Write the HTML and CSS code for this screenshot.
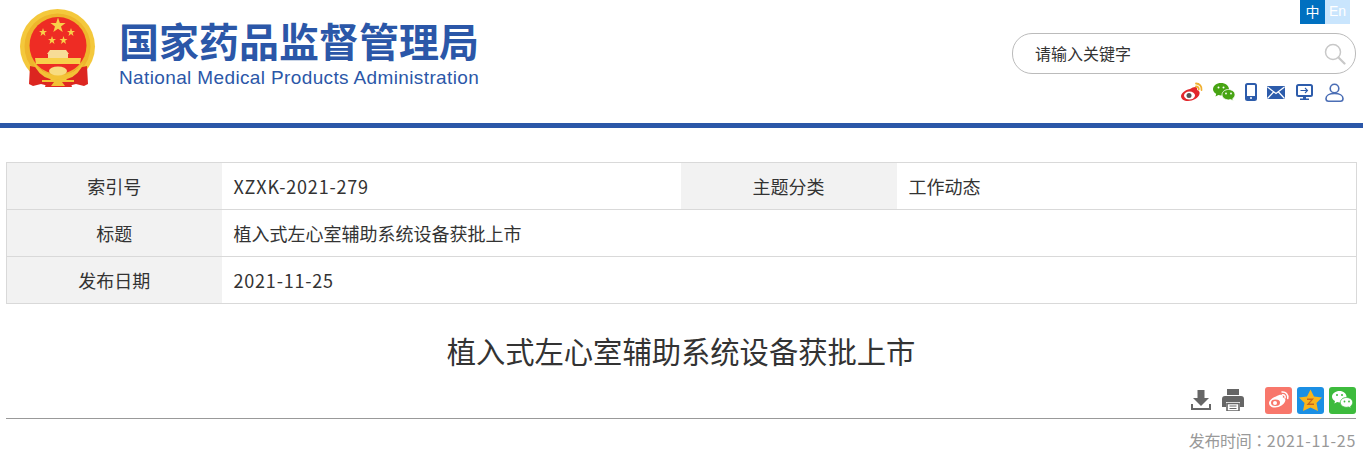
FILE: index.html
```html
<!DOCTYPE html>
<html lang="zh-CN">
<head>
<meta charset="utf-8">
<title>植入式左心室辅助系统设备获批上市</title>
<link rel="stylesheet" href="styles.css">
</head>
<body>
<header class="site-header">
  <a class="brand">
    <svg class="emblem" viewBox="20 8 76 81" width="76" height="81">
      <circle cx="57.500" cy="46.500" r="37.500" fill="#f4c83c"/>
      <circle cx="57.500" cy="46.500" r="33" fill="#eeb52c"/>
      <circle cx="58" cy="45.500" r="28.500" fill="#ee2c24"/>
      <polygon fill="#f8d04a" points="58,17.500 59.900,23 65.600,23 61,26.400 62.700,32 58,28.700 53.300,32 55,26.400 50.400,23 56.100,23"/>
      <polygon fill="#f8d04a" points="43,28 44,31 47,31 44.600,32.800 45.500,36 43,34.100 40.500,36 41.400,32.800 39,31 42,31"/>
      <polygon fill="#f8d04a" points="71,28 72,31 75,31 72.600,32.800 73.500,36 71,34.100 68.500,36 69.400,32.800 67,31 70,31"/>
      <polygon fill="#f8d04a" points="52,36 53,39 56,39 53.600,40.800 54.500,44 52,42.100 49.500,44 50.400,40.800 48,39 51,39"/>
      <polygon fill="#f8d04a" points="63.500,36 64.500,39 67.500,39 65.100,40.800 66,44 63.500,42.100 61,44 61.900,40.800 59.500,39 62.500,39"/>
      <path d="M47 54l3-4h16l3 4h-1v4H48v-4z" fill="#f7dc96"/>
      <path d="M35 58h46l-1 6H36z" fill="#f8d04a"/>
      <path d="M30 66l9 2 12 9-2 9-8-2-8 2-4-2z" fill="#dc2620"/>
      <path d="M87 66l-9 2-12 9 2 9 8-2 8 2 4-2z" fill="#dc2620"/>
      <path d="M47 80h23l2 7H45z" fill="#e02a22"/>
      <path d="M33 62q10 11 19 13h13q9-2 19-13-5 14-17 17H50Q38 76 33 62z" fill="#f3c236"/>
      <ellipse cx="58" cy="71" rx="9" ry="4.500" fill="#f8dc80"/>
      <path d="M42 80h32v2H62l3 4H51l3-4H42z" fill="#f3c236"/>
    </svg>
    <span class="brand-text">
      <strong class="brand-cn">国家药品监督管理局</strong>
      <span class="brand-en">National Medical Products Administration</span>
    </span>
  </a>
  <div class="tools">
    <div class="lang"><span class="lang-cn">中</span><span class="lang-en">En</span></div>
    <div class="search">
      <span class="search-text">请输入关键字</span>
      <svg class="search-icon" viewBox="0 0 22 22" width="22" height="22"><circle cx="9" cy="9" r="7.500" fill="none" stroke="#c8c8c8" stroke-width="1.500"/><path d="M14.500 14.500l6 6" stroke="#c8c8c8" stroke-width="2.200" stroke-linecap="round"/></svg>
    </div>
    <div class="links">
      <svg class="l-weibo" viewBox="0 0 24 20" width="24" height="20"><path d="M10 7c3-2 6-3 7-1 .5 1 0 2 0 2 2 .5 3 2 2.500 4C18.500 16 13 19 8 19c-4 0-7-2-7-5 0-2 3-6 9-7z" fill="#e2272c"/><ellipse cx="9.500" cy="13.500" rx="5.500" ry="4" fill="#fff"/><circle cx="9" cy="13.500" r="2.500" fill="#555"/><path d="M16 1.500c3.500 0 6 3 5.500 6.500M16 4.500c2 0 3 1.300 2.800 3" fill="none" stroke="#f0b030" stroke-width="1.800" stroke-linecap="round"/></svg>
      <svg class="l-wechat" viewBox="0 0 22 18" width="22" height="18"><path d="M8 0c4.400 0 8 2.700 8 6.200 0 3.400-3.600 6.200-8 6.200-1 0-1.800-.1-2.600-.4L2.500 13.500l.7-2.700C1.200 9.600 0 8 0 6.200 0 2.700 3.600 0 8 0z" fill="#47a413"/><path d="M15.500 6.500c3.600 0 6.500 2.300 6.500 5.200 0 1.600-.9 3-2.300 4l.5 2.200-2.500-1.300c-.7.200-1.400.3-2.200.3-3.600 0-6.500-2.300-6.500-5.200s2.900-5.200 6.500-5.200z" fill="#47a413" stroke="#fff" stroke-width=".8"/><circle cx="5.500" cy="4.500" r="1" fill="#fff"/><circle cx="10.500" cy="4.500" r="1" fill="#fff"/><circle cx="13" cy="10.500" r=".9" fill="#fff"/><circle cx="18" cy="10.500" r=".9" fill="#fff"/></svg>
      <svg class="l-phone" viewBox="0 0 12 18" width="12" height="18"><rect x="1" y="1" width="10" height="16" rx="1.500" fill="none" stroke="#2d5cab" stroke-width="2"/><rect x="1" y="13" width="10" height="4" fill="#2d5cab"/><circle cx="6" cy="15" r="1" fill="#fff"/></svg>
      <svg class="l-mail" viewBox="0 0 18 13" width="18" height="13"><rect width="18" height="13" rx="1" fill="#2d5cab"/><path d="M.5 1L9 7.500 17.500 1M.5 12.500L6.500 6M17.500 12.500L11.500 6" fill="none" stroke="#fff" stroke-width="1.200"/></svg>
      <svg class="l-screen" viewBox="0 0 17 17" width="17" height="17"><rect x="1" y="1" width="15" height="11" rx="1.500" fill="none" stroke="#2d5cab" stroke-width="2"/><path d="M4.500 6.500h7M9 4l2.500 2.500L9 9" fill="none" stroke="#2d5cab" stroke-width="1.100"/><path d="M7 12h3v2.500h3V16H4v-1.500h3z" fill="#2d5cab"/></svg>
      <svg class="l-user" viewBox="0 0 19 19" width="19" height="19"><circle cx="9.500" cy="5.500" r="4.300" fill="none" stroke="#4b6eb5" stroke-width="1.600"/><path d="M1 15.500c0-3 3.500-5 8.500-5s8.500 2 8.500 5c0 1.700-1 2.700-2.500 2.700h-12C2 18.200 1 17.200 1 15.500z" fill="none" stroke="#4b6eb5" stroke-width="1.600"/></svg>
    </div>
  </div>
</header>

<main class="content">
  <table class="meta">
    <colgroup><col class="c-1"><col class="c-2"><col class="c-3"><col class="c-4"></colgroup>
    <tr><th>索引号</th><td class="latin">XZXK-2021-279</td><th>主题分类</th><td>工作动态</td></tr>
    <tr><th>标题</th><td colspan="3">植入式左心室辅助系统设备获批上市</td></tr>
    <tr><th>发布日期</th><td colspan="3" class="latin">2021-11-25</td></tr>
  </table>

  <h1 class="title">植入式左心室辅助系统设备获批上市</h1>

  <div class="actions">
    <svg class="a-down" viewBox="0 0 22 22" width="22" height="22"><path d="M7.500 1h7v8h4.500L11 17 3 9h4.500z" fill="#666"/><path d="M1 15v6h20v-6h-2v4H3v-4z" fill="#666"/></svg>
    <svg class="a-print" viewBox="0 0 22 22" width="22" height="22"><path d="M5 0h12v6H5z" fill="#666"/><path d="M3 7h16a3 3 0 0 1 3 3v8h-4v-5H4v5H0v-8a3 3 0 0 1 3-3z" fill="#666"/><path d="M5 14.500h12V22H5z" fill="none" stroke="#666" stroke-width="1.600"/><path d="M7.500 17h7M7.500 19.500h7" stroke="#666"/></svg>
    <svg class="a-square" viewBox="0 0 27 27" width="27" height="27"><rect width="27" height="27" rx="3" fill="#f8776b"/><path d="M11 9.500c3-1.800 6-2.500 6.800-.8.300.7 0 1.700 0 1.700 2 .4 3 1.800 2.400 3.600-1 3.500-5.500 6.500-10 6.500C6.500 20.500 4 18.700 4 16c0-1.800 2.500-5 7-6.500z" fill="#fff"/><ellipse cx="10.500" cy="15.800" rx="4.500" ry="3.300" fill="#f8776b"/><circle cx="10" cy="16" r="2" fill="#fff"/><path d="M17 5c3.500-.5 6.500 2.500 5.700 6.500M17.500 7.800c1.800-.2 3 1.200 2.600 3" fill="none" stroke="#fff" stroke-width="1.500" stroke-linecap="round"/></svg>
    <svg class="a-square" viewBox="0 0 27 27" width="27" height="27"><rect width="27" height="27" rx="3" fill="#1b8fe4"/><polygon points="13.500,2.500 17,9.500 25,10.500 19.500,16 21,24 13.500,20.500 6,24 7.500,16 2,10.500 10,9.500" fill="#f9b51c"/><path d="M10 11.500h7l-4.500 5H17v1.500h-7.500l4.500-5H10z" fill="#c8641a"/></svg>
    <svg class="a-square" viewBox="0 0 27 27" width="27" height="27"><rect width="27" height="27" rx="3" fill="#3dbb3d"/><path d="M10.500 4c4 0 7 2.500 7 5.700 0 3.100-3 5.700-7 5.700-.9 0-1.700-.1-2.400-.3l-2.700 1.400.6-2.400C4.300 13 3 11.500 3 9.700 3 6.500 6.500 4 10.500 4z" fill="#fff"/><path d="M17.500 10.500c3.500 0 6.200 2.200 6.200 5 0 1.500-.8 2.800-2.100 3.700l.5 2-2.300-1.200c-.7.200-1.500.3-2.300.3-3.500 0-6.200-2.200-6.200-4.900s2.700-4.900 6.200-4.900z" fill="#fff" stroke="#3dbb3d" stroke-width=".8"/><circle cx="8" cy="8" r="1" fill="#3dbb3d"/><circle cx="13" cy="8" r="1" fill="#3dbb3d"/><circle cx="15.500" cy="14.500" r=".9" fill="#3dbb3d"/><circle cx="20" cy="14.500" r=".9" fill="#3dbb3d"/></svg>
  </div>
  <div class="pubdate"><span class="pub-label">发布时间<span class="pub-colon" lang="zh-TW">：</span></span><span class="latin-date">2021-11-25</span></div>
</main>
</body>
</html>
```

FILE: styles.css
```css
* { box-sizing: border-box; }

html, body {
  margin: 0;
  padding: 0;
  background: #fff;
  color: #333;
  font-family: "Noto Sans CJK SC", "Noto Sans", sans-serif;
}

.site-header {
  display: flex;
  justify-content: space-between;
  height: 128px;
  padding: 0 7px 0 20px;
  border-bottom: 5px solid #2b57a8;
}

.brand {
  display: flex;
  align-items: flex-start;
  padding-top: 8px;
  color: #2b57a8;
}

.emblem { display: block; flex: none; }

.brand-text {
  display: flex;
  flex-direction: column;
  margin-left: 23px;
}

.brand-cn {
  margin-top: 10px;
  font-size: 40px;
  line-height: 44px;
  font-weight: 700;
  white-space: nowrap;
}

.brand-en {
  margin-top: 4px;
  font-family: "Liberation Sans", Arial, sans-serif;
  font-size: 19px;
  line-height: 24px;
  letter-spacing: .37px;
  white-space: nowrap;
}

.tools {
  display: flex;
  flex-direction: column;
  align-items: flex-end;
  width: 344px;
}

.lang {
  display: flex;
  margin-right: 6px;
  font-size: 14px;
  line-height: 22px;
  text-align: center;
}

.lang-cn, .lang-en { width: 25px; height: 24px; color: #fff; }
.lang-cn { background: #0070c0; }
.lang-en { background: #c9e5fd; font-family: "Liberation Sans", sans-serif; }

.search {
  display: flex;
  align-items: center;
  justify-content: space-between;
  width: 344px;
  height: 41px;
  margin-top: 9px;
  padding: 0 9px 2px 22px;
  border: 1px solid #bbb;
  border-radius: 20px;
}

.search-text { font-size: 16px; line-height: 22px; color: #333; }
.search-icon { margin-top: 2px; }

.links {
  display: flex;
  align-items: center;
  height: 20px;
  margin-top: 8px;
  padding-right: 12px;
}

.links svg { display: block; }
.l-wechat { margin-left: 9px; }
.l-phone { margin-left: 10px; }
.l-mail { margin-left: 10px; }
.l-screen { margin-left: 11px; }
.l-user { margin-left: 12px; }

.content { padding: 34px 7px 0 6px; }

.meta {
  width: 1350px;
  border-collapse: collapse;
  table-layout: fixed;
  border: 1px solid #d9d9d9;
  font-size: 18px;
}

.c-1 { width: 215px; }
.c-2 { width: 459px; }
.c-3 { width: 216px; }
.c-4 { width: 460px; }

.meta tr { height: 47px; }

.meta th, .meta td {
  padding: 0;
  border: 1px solid #d9d9d9;
  border-left: 0;
  border-right: 0;
  color: #333;
  font-weight: 400;
  line-height: 24px;
}

.meta th { background: #f2f2f2; text-align: center; }
.meta td { padding-left: 12px; }
.meta .latin { letter-spacing: .8px; }

.title {
  margin: 26px 0 0;
  font-size: 29.300px;
  line-height: 40px;
  font-weight: 400;
  text-align: center;
  color: #333;
}

.actions {
  display: flex;
  justify-content: flex-end;
  align-items: center;
  height: 32px;
  margin-top: 17px;
  padding-bottom: 5px;
  border-bottom: 1px solid #999;
}

.actions svg { display: block; }
.a-down { margin-right: 10px; }
.a-print { margin-right: 21px; }
.a-square { margin-left: 5px; }
.a-print + .a-square { margin-left: 0; }

.pubdate {
  margin-top: 9px;
  font-size: 16px;
  line-height: 24px;
  color: #999;
  text-align: right;
}

.pub-label { letter-spacing: -.4px; }
.pub-colon { font-family: "Noto Sans CJK TC", sans-serif; }
.latin-date { letter-spacing: .7px; }
```
